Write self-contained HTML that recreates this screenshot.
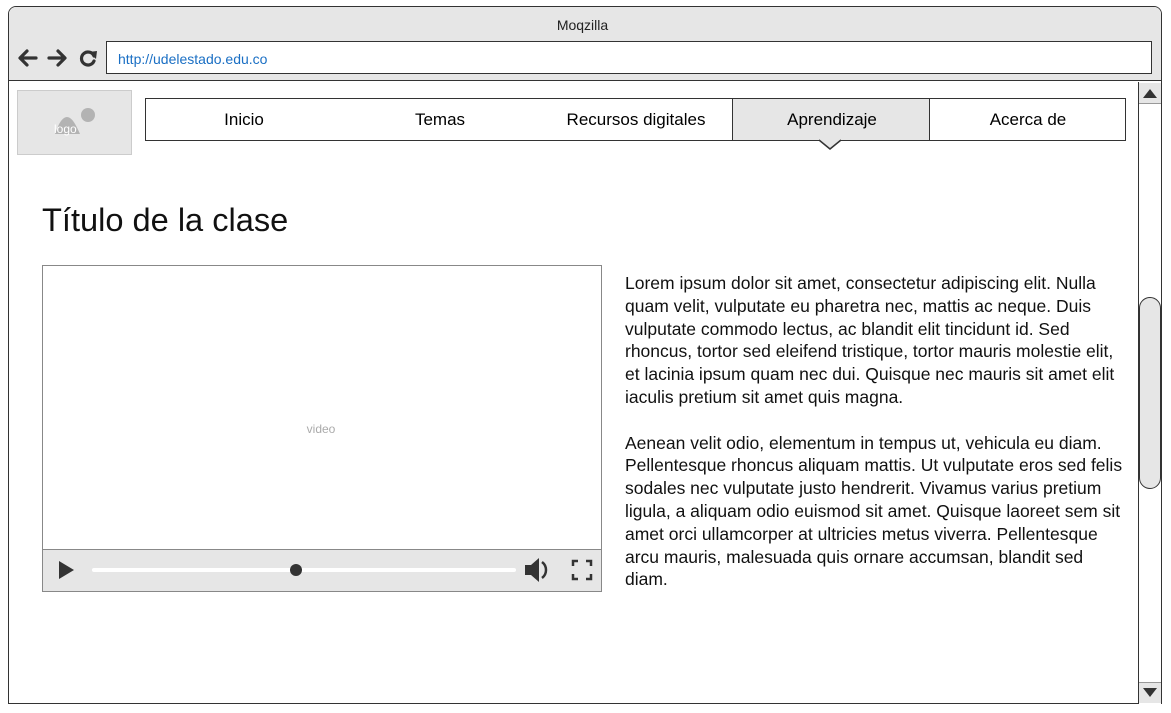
<!DOCTYPE html><html><head><meta charset="utf-8"><style>
*{margin:0;padding:0;box-sizing:border-box}
body{width:1171px;height:713px;background:#fff;font-family:"Liberation Sans",sans-serif;position:relative;overflow:hidden}
.a{position:absolute}
</style></head><body>
<div class="a" style="left:8px;top:6px;width:1154px;height:698px;border:1.5px solid #333;border-radius:8px 8px 0 0;background:#fff"></div>
<div class="a" style="left:9px;top:7px;width:1152px;height:74px;background:#e6e6e6;border-radius:7px 7px 0 0;border-bottom:1.5px solid #333"></div>
<div class="a" style="left:-3px;top:17px;width:1171px;text-align:center;font-size:14px;color:#222">Moqzilla</div>
<svg class="a" style="left:16px;top:46px" width="86" height="24" viewBox="0 0 86 24">
<g fill="none" stroke="#333" stroke-width="3.2" stroke-linecap="round" stroke-linejoin="round">
<path d="M20 12H5M11 5L4 12L11 19"/><path d="M33 12H48M42 5L49 12L42 19"/>
<path d="M78 10A6.5 6.5 0 1 0 78 15"/></g>
<path d="M73 6L81 5L80 13Z" fill="#333"/></svg>
<div class="a" style="left:106px;top:41px;width:1046px;height:33px;border:1.5px solid #333;background:#fff;font-size:14px;color:#1a6fc4;padding:9px 11px">http://udelestado.edu.co</div>
<div class="a" style="left:17px;top:90px;width:115px;height:65px;background:#e6e6e6;border:1px solid #ccc"></div>
<svg class="a" style="left:50px;top:103px" width="50" height="35"><circle cx="38" cy="12" r="7" fill="#b3b3b3"/><path d="M5 31C8 22 12 14 17 14C22 14 26 22 30 31Z" fill="#b3b3b3"/><text x="4" y="30" font-size="12" fill="#fff" font-family="Liberation Sans">logo</text></svg>
<div class="a" style="left:145px;top:98px;width:981px;height:43px;border:1.5px solid #333;background:#fff"></div>
<div class="a" style="left:732px;top:98px;width:198px;height:43px;border:1.5px solid #333;background:#e6e6e6"></div>
<svg class="a" style="left:818px;top:139px" width="24" height="12"><path d="M1 1L12 10L23 1" fill="#e6e6e6" stroke="#333" stroke-width="1.5"/></svg>
<div class="a" style="left:146px;top:110px;width:196px;text-align:center;font-size:17px">Inicio</div>
<div class="a" style="left:342px;top:110px;width:196px;text-align:center;font-size:17px">Temas</div>
<div class="a" style="left:538px;top:110px;width:196px;text-align:center;font-size:17px">Recursos digitales</div>
<div class="a" style="left:734px;top:110px;width:196px;text-align:center;font-size:17px">Aprendizaje</div>
<div class="a" style="left:930px;top:110px;width:196px;text-align:center;font-size:17px">Acerca de</div>
<div class="a" style="left:42px;top:201px;font-size:32.6px;color:#111">Título de la clase</div>
<div class="a" style="left:42px;top:265px;width:560px;height:327px;border:1.5px solid #888;background:#fff"></div>
<div class="a" style="left:41px;top:422px;width:560px;text-align:center;font-size:12px;color:#aaa">video</div>
<div class="a" style="left:43px;top:549px;width:558px;height:42px;background:#e6e6e6;border-top:1.5px solid #888"></div>
<svg class="a" style="left:43px;top:550px" width="558" height="40">
<path d="M16 11L31 20L16 29Z" fill="#333"/>
<line x1="51" y1="20" x2="471" y2="20" stroke="#fff" stroke-width="4" stroke-linecap="round"/>
<circle cx="253" cy="20" r="6" fill="#333"/>
<path d="M482 15H488L496 8V32L488 25H482Z" fill="#333"/><path d="M499 12A10 10 0 0 1 499 28" stroke="#333" stroke-width="2.5" fill="none"/>
<path d="M530 16V11H535M543 11H548V16M548 24V29H543M535 29H530V24" stroke="#333" stroke-width="2.5" fill="none"/>
</svg>
<div class="a" style="left:625px;top:272px;width:502px;font-size:17.5px;line-height:22.8px;color:#111">Lorem ipsum dolor sit amet, consectetur adipiscing elit. Nulla quam velit, vulputate eu pharetra nec, mattis ac neque. Duis vulputate commodo lectus, ac blandit elit tincidunt id. Sed rhoncus, tortor sed eleifend tristique, tortor mauris molestie elit, et lacinia ipsum quam nec dui. Quisque nec mauris sit amet elit iaculis pretium sit amet quis magna.<br><br>Aenean velit odio, elementum in tempus ut, vehicula eu diam. Pellentesque rhoncus aliquam mattis. Ut vulputate eros sed felis sodales nec vulputate justo hendrerit. Vivamus varius pretium ligula, a aliquam odio euismod sit amet. Quisque laoreet sem sit amet orci ullamcorper at ultricies metus viverra. Pellentesque arcu mauris, malesuada quis ornare accumsan, blandit sed diam.</div>
<div class="a" style="left:1138px;top:82px;width:24px;height:622px;border-left:1.5px solid #333;border-right:1.5px solid #333;background:#fff"></div>
<div class="a" style="left:1139px;top:83px;width:22px;height:21px;background:#e6e6e6;border-bottom:1px solid #999"></div>
<svg class="a" style="left:1142px;top:87px" width="16" height="12"><path d="M1 11L8 2L15 11Z" fill="#333"/></svg>
<div class="a" style="left:1139px;top:682px;width:22px;height:21px;background:#e6e6e6;border-top:1px solid #999"></div>
<svg class="a" style="left:1142px;top:687px" width="16" height="12"><path d="M1 1L8 10L15 1Z" fill="#333"/></svg>
<div class="a" style="left:1139px;top:297px;width:22px;height:192px;background:#e6e6e6;border:1.5px solid #333;border-radius:11px"></div>
</body></html>
